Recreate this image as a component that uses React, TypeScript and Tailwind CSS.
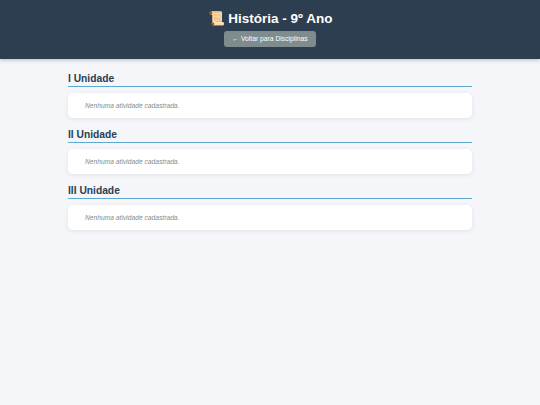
import React from 'react';

const units = ['I Unidade', 'II Unidade', 'III Unidade'];

export default function App() {
  return (
    <div className="min-h-[405px] bg-[#f4f6f9] font-['Liberation_Sans',Arial,sans-serif]">
      <header className="h-[59px] bg-[#2c3e50] flex flex-col items-center pt-[10px] shadow-[0_1px_4px_rgba(0,0,0,0.25)]">
        <h1 className="text-[13.5px] leading-[18px] font-bold text-white">📜 História - 9º Ano</h1>
        <a className="mt-[3px] h-[16px] w-[92px] flex items-center justify-center rounded-[3px] bg-[#7f8c8d] text-[6.75px] text-white">
          ← Voltar para Disciplinas
        </a>
      </header>
      <main className="w-[404px] mx-auto pt-[11px] flex flex-col gap-[8px]">
        {units.map((unit) => (
          <section key={unit}>
            <h2 className="h-[17px] text-[10.25px] leading-[17px] font-bold text-[#2c3e50] border-b border-[#5fa8cf]">{unit}</h2>
            <div className="mt-[6px] h-[25px] bg-white rounded-[5px] shadow-[0_1px_5px_rgba(0,0,0,0.08)] pl-[17px] pt-[1px] flex items-center">
              <p className="text-[6.7px] italic text-[#7f8c8d]">Nenhuma atividade cadastrada.</p>
            </div>
          </section>
        ))}
      </main>
    </div>
  );
}
